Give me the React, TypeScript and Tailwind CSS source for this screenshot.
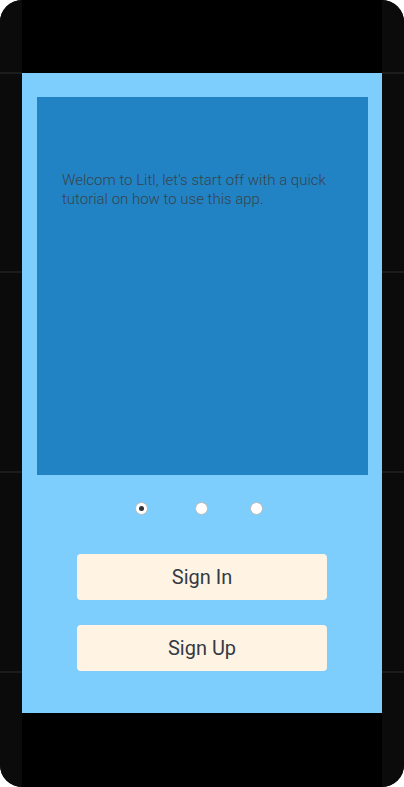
import React from "react";

function SideRail() {
  return (
    <div className="flex w-[22px] flex-col bg-[#0b0b0b]">
      <div className="h-[72px]" />
      <div className="h-[2px] bg-[#1c1c1c]" />
      <div className="h-[197px]" />
      <div className="h-[2px] bg-[#1c1c1c]" />
      <div className="h-[198px]" />
      <div className="h-[2px] bg-[#1c1c1c]" />
      <div className="h-[198px]" />
      <div className="h-[2px] bg-[#1c1c1c]" />
      <div className="flex-1" />
    </div>
  );
}

function Dot({ active }: { active?: boolean }) {
  return (
    <div className="flex h-[13px] w-[13px] items-center justify-center rounded-full border border-[#b9b9b9] bg-white">
      {active && <div className="h-[5px] w-[5px] rounded-full bg-[#333]" />}
    </div>
  );
}

export default function App() {
  return (
    <div
      className="h-[787px] w-[404px] bg-white"
      style={{ fontFamily: "Roboto, 'Liberation Sans', sans-serif" }}
    >
      <div className="flex h-full w-full overflow-hidden rounded-[22px] bg-[#0b0b0b]">
        <SideRail />
        <div className="flex w-[360px] flex-col bg-black">
          <div className="h-[73px]" />
          <div className="flex h-[640px] flex-col bg-[#7dcdfd]">
            <div className="ml-[15px] mt-[24px] h-[378px] w-[331px] bg-[#2183c4] pl-[25px] pr-[25px] pt-[74px]">
              <p className="text-[15px] font-light leading-[19px] text-[#38434e]">
                Welcom to Litl, let's start off with a quick tutorial on how to
                use this app.
              </p>
            </div>
            <div className="mt-[27px] flex h-[13px] items-center pl-[113px]">
              <Dot active />
              <div className="w-[47px]" />
              <Dot />
              <div className="w-[42px]" />
              <Dot />
            </div>
            <button className="ml-[55px] mt-[39px] flex h-[46px] w-[250px] items-center justify-center rounded-[4px] bg-[#fff4e4] text-[20px] text-[#343a44]">
              Sign In
            </button>
            <button className="ml-[55px] mt-[25px] flex h-[46px] w-[250px] items-center justify-center rounded-[4px] bg-[#fff4e4] text-[20px] text-[#343a44]">
              Sign Up
            </button>
          </div>
          <div className="flex-1" />
        </div>
        <SideRail />
      </div>
    </div>
  );
}
